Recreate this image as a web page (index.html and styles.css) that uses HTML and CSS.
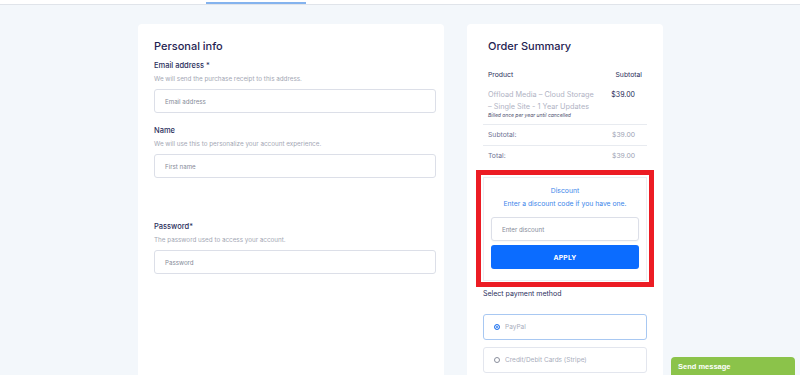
FILE: index.html
```html
<!DOCTYPE html>
<html lang="en">
<head>
<meta charset="utf-8">
<title>Checkout</title>
<link rel="stylesheet" href="styles.css">
</head>
<body>
<div class="topbar"><span class="tab-line"></span></div>
<main class="checkout">
  <section class="card personal">
    <h2 class="card-title">Personal info</h2>
    <div class="field field-email">
      <label class="field-label">Email address <span class="req">*</span></label>
      <p class="field-help">We will send the purchase receipt to this address.</p>
      <div class="input">Email address</div>
    </div>
    <div class="field field-name">
      <label class="field-label">Name</label>
      <p class="field-help">We will use this to personalize your account experience.</p>
      <div class="input">First name</div>
    </div>
    <div class="field field-password">
      <label class="field-label">Password<span class="req">*</span></label>
      <p class="field-help">The password used to access your account.</p>
      <div class="input">Password</div>
    </div>
  </section>

  <aside class="card summary">
    <h2 class="card-title">Order Summary</h2>
    <div class="summary-table">
      <div class="row head">
        <span>Product</span><span>Subtotal</span>
      </div>
      <div class="row product">
        <div class="product-info">
          <div class="product-name">Offload Media – Cloud Storage – Single Site - 1 Year Updates</div>
          <div class="billed">Billed once per year until cancelled</div>
        </div>
        <span class="price">$39.00</span>
      </div>
      <div class="row total-row">
        <span>Subtotal:</span><span>$39.00</span>
      </div>
      <div class="row total-row">
        <span>Total:</span><span>$39.00</span>
      </div>
    </div>

    <div class="highlight">
      <div class="discount">
        <div class="discount-title">Discount</div>
        <div class="discount-sub">Enter a discount code if you have one.</div>
        <div class="input discount-input">Enter discount</div>
        <button class="apply">APPLY</button>
      </div>
    </div>

    <div class="pay-title">Select payment method</div>
    <div class="pay-option selected"><span class="radio on"></span>PayPal</div>
    <div class="pay-option"><span class="radio"></span>Credit/Debit Cards (Stripe)</div>
  </aside>
</main>
<div class="send-message">Send message</div>
</body>
</html>
```

FILE: styles.css
```css
* { box-sizing: border-box; }

html, body {
  margin: 0;
  padding: 0;
}

body {
  background: #f3f7fb;
  font-family: "Inter", "Lato", sans-serif;
  color: #262a55;
  height: 375px;
  overflow: hidden;
}

.topbar {
  height: 5px;
  background: #ffffff;
  border-bottom: 1px solid #e0e4ea;
  display: flex;
  align-items: flex-end;
  padding-left: 206px;
}

.tab-line {
  display: block;
  width: 100px;
  height: 2px;
  background: #84b3ee;
}

.checkout {
  display: flex;
  justify-content: center;
  align-items: stretch;
  gap: 23px;
  padding-top: 19px;
  padding-left: 1px;
  height: 370px;
}

.card {
  background: #ffffff;
  border-radius: 4px 4px 0 0;
}

.card-title {
  margin: 0;
  font-size: 11px;
  line-height: 14px;
  font-weight: 500;
  color: #1f2352;
}

/* Personal info */
.personal {
  width: 306px;
  padding: 15px 8px 0 16px;
}

.field-label {
  display: block;
  font-size: 7.5px;
  line-height: 12px;
  font-weight: 500;
  color: #2a2e5c;
}

.req { color: #2a2e5c; font-weight: 400; }

.field-help {
  margin: 2px 0 5px;
  font-size: 6.3px;
  line-height: 10px;
  color: #a3a7b4;
}

.input {
  height: 24px;
  border: 1px solid #dcdfe8;
  border-radius: 3px;
  padding-left: 10px;
  display: flex;
  align-items: center;
  font-size: 6.2px;
  color: #858a98;
  background: #ffffff;
}

.field-email { margin-top: 7px; }
.field-name { margin-top: 12px; }
.field-password { margin-top: 43px; }

/* Summary */
.summary {
  width: 196px;
  padding: 15px 16px 0 16px;
}

.summary .card-title { padding-left: 5px; }

.summary-table {
  margin-top: 16px;
}

.row {
  display: flex;
  justify-content: space-between;
  align-items: flex-start;
  padding: 0 5px;
  font-size: 6.8px;
  line-height: 12px;
}

.row.head {
  color: #2a2e5a;
  font-weight: 400;
}

.row.product {
  padding-top: 8px;
  padding-bottom: 5px;
  border-bottom: 1px solid #e8ebf0;
}

.product-info { width: 110px; }

.product-name {
  font-size: 7.3px;
  line-height: 11.5px;
  color: #b0b3c4;
}

.billed {
  font-size: 5px;
  line-height: 7px;
  font-style: italic;
  color: #4a4e6c;
}

.price {
  font-size: 7px;
  line-height: 11.5px;
  color: #262a55;
  font-weight: 400;
  padding-right: 7px;
}

.row.total-row {
  padding-top: 4px;
  padding-bottom: 4px;
  color: #6f7393;
  border-bottom: 1px solid #e8ebf0;
}

.row.total-row:last-child {
  border-bottom: none;
}

.row.total-row span:last-child {
  color: #9c9fb3;
  padding-right: 7px;
}

.highlight {
  margin: 4px -7px 0 -7px;
  border: 5px solid #ec1c24;
  padding: 2px 2px 1px 2px;
}

.discount {
  border: 1px solid #eceef2;
  padding: 7px 7px 11px 7px;
  text-align: center;
}

.discount-title,
.discount-sub {
  font-size: 6.8px;
  line-height: 12.5px;
  color: #3d86ea;
}

.discount-input {
  margin-top: 7px;
  height: 24px;
  text-align: left;
  box-shadow: 0 1px 2px rgba(0, 0, 0, 0.04);
}

.apply {
  display: block;
  width: 100%;
  height: 24px;
  margin-top: 4px;
  border: none;
  border-radius: 3px;
  background: #0b6cff;
  color: #ffffff;
  font-family: inherit;
  font-size: 6.8px;
  font-weight: 700;
  letter-spacing: 0.2px;
}

.pay-title {
  margin-top: 1px;
  font-size: 7px;
  line-height: 12px;
  color: #2c3060;
}

.pay-option {
  height: 26px;
  margin-top: 7px;
  border: 1px solid #e3e6ee;
  border-radius: 3px;
  display: flex;
  align-items: center;
  padding-left: 10px;
  gap: 5px;
  font-size: 6.5px;
  color: #a9adbc;
}

.pay-option.selected {
  margin-top: 14px;
  border-color: #a8c8f2;
}

.radio {
  width: 6px;
  height: 6px;
  border-radius: 50%;
  border: 1px solid #8a8e9c;
  background: #fff;
}

.radio.on {
  border-color: #2f7df0;
  background: #2f7df0;
  box-shadow: inset 0 0 0 1px #ffffff;
}

.send-message {
  position: fixed;
  right: 5px;
  bottom: 0;
  width: 124px;
  height: 18px;
  padding-left: 7px;
  display: flex;
  align-items: center;
  background: #8bc34a;
  border-radius: 4px 4px 0 0;
  color: #ffffff;
  font-family: "Liberation Sans", Arial, sans-serif;
  font-weight: 700;
  font-size: 7.5px;
}
```
